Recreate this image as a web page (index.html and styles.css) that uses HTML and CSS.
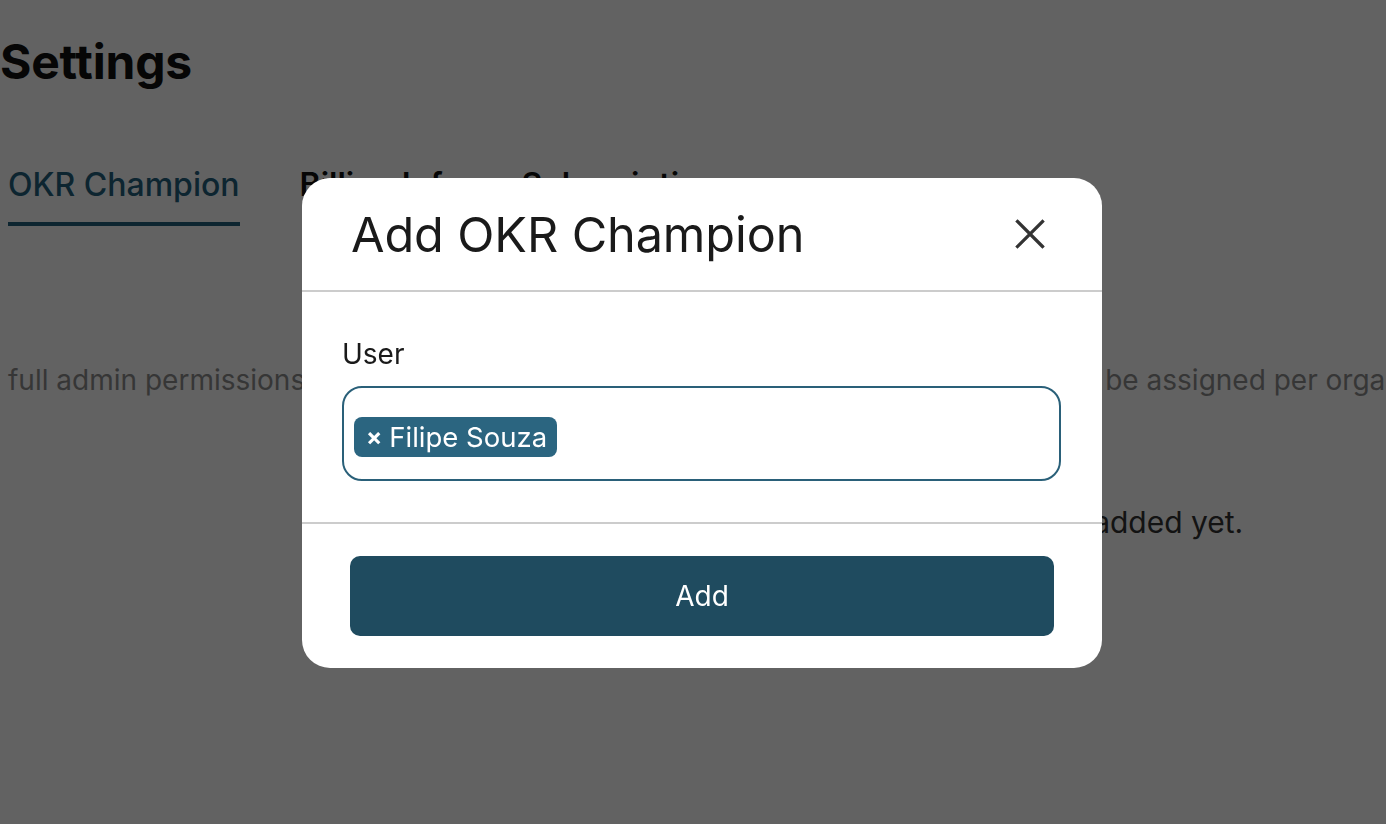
FILE: index.html
```html
<!DOCTYPE html>
<html lang="en">
<head>
<meta charset="utf-8">
<title>Settings</title>
<link rel="stylesheet" href="styles.css">
</head>
<body>
<main class="page">
  <h1 class="page-title">Settings</h1>
  <nav class="tabs">
    <span class="tab tab-active">OKR Champion</span>
    <span class="tab">Billing Info</span>
    <span class="tab">Subscription</span>
  </nav>
  <p class="desc">full admin permissions to manage all objectives and key results. Only one user can be assigned per organization.</p>
  <p class="empty">No OKR Champions have been added yet.</p>
</main>

<div class="overlay">
  <div class="modal">
    <div class="modal-header">
      <h2 class="modal-title">Add OKR Champion</h2>
      <button class="close" aria-label="Close">
        <svg width="32" height="32" viewBox="0 0 32 32"><path d="M3.5 3.5 L28.5 28.5 M28.5 3.5 L3.5 28.5" stroke="#333" stroke-width="3.2" stroke-linecap="square" fill="none"/></svg>
      </button>
    </div>
    <div class="modal-body">
      <label class="label">User</label>
      <div class="select">
        <span class="chip"><span class="chip-x">×</span>Filipe Souza</span>
      </div>
    </div>
    <div class="modal-footer">
      <button class="btn">Add</button>
    </div>
  </div>
</div>
</body>
</html>
```

FILE: styles.css
```css
* { box-sizing: border-box; }
html, body { margin: 0; padding: 0; }
body {
  font-family: Inter, "Noto Sans", "Liberation Sans", sans-serif;
  background: #fff;
  color: #111;
  width: 1386px;
  height: 824px;
  overflow: hidden;
}
.page { padding: 0; }
.page-title {
  margin: 0;
  padding-top: 33px;
  font-size: 48px;
  line-height: 58px;
  font-weight: 700;
  color: #111;
  letter-spacing: -0.2px;
}
.tabs {
  display: flex;
  gap: 60px;
  margin-top: 74px;
  padding-left: 8px;
}
.tab {
  font-size: 32px;
  line-height: 40px;
  font-weight: 600;
  color: #111;
  padding-bottom: 17px;
}
.tab-active {
  font-weight: 500;
  color: #22607e;
  border-bottom: 4px solid #22607e;
}
.desc {
  margin: 138px 0 0 8px;
  font-size: 28px;
  line-height: 32px;
  color: #8e8e8e;
  white-space: nowrap;
}
.empty {
  margin: 108px 0 0 649px;
  font-size: 30px;
  line-height: 36px;
  color: #333;
  white-space: nowrap;
}
.overlay {
  position: fixed;
  inset: 0;
  background: rgba(0, 0, 0, 0.615);
  display: flex;
  align-items: flex-start;
  padding: 178px 0 0 302px;
}
.modal {
  width: 800px;
  height: 490px;
  background: #fff;
  border-radius: 28px;
  display: flex;
  flex-direction: column;
  overflow: hidden;
}
.modal-header {
  height: 114px;
  flex: none;
  display: flex;
  align-items: center;
  justify-content: space-between;
  padding: 0 56px 0 49px;
  border-bottom: 2px solid #cccccc;
}
.modal-title {
  margin: 0;
  font-size: 48.6px;
  font-weight: 400;
  color: #1a1a1a;
  letter-spacing: -0.1px;
}
.close {
  border: 0;
  background: none;
  padding: 0;
  width: 32px;
  height: 32px;
  display: flex;
}
.modal-body {
  height: 232px;
  flex: none;
  padding: 45px 41px 0 40px;
  border-bottom: 2px solid #cccccc;
}
.label {
  display: block;
  font-size: 28px;
  line-height: 34px;
  color: #1a1a1a;
}
.select {
  margin-top: 15px;
  height: 95px;
  border: 2px solid #2a6079;
  border-radius: 20px;
  padding: 29px 10px 0;
  display: flex;
  align-items: flex-start;
}
.chip {
  display: inline-flex;
  align-items: center;
  height: 40px;
  padding: 0 10px 0 12px;
  background: #2b6580;
  color: #fff;
  border-radius: 8px;
  font-size: 27.5px;
  line-height: 40px;
}
.chip-x {
  font-weight: 700;
  font-size: 24px;
  margin-right: 7px;
}
.modal-footer {
  flex: 1;
  padding: 32px 48px 0;
}
.btn {
  width: 100%;
  height: 80px;
  border: 0;
  border-radius: 10px;
  background: #1f4b5f;
  color: #fff;
  font-family: Inter, "Noto Sans", sans-serif;
  font-size: 28px;
}
```
